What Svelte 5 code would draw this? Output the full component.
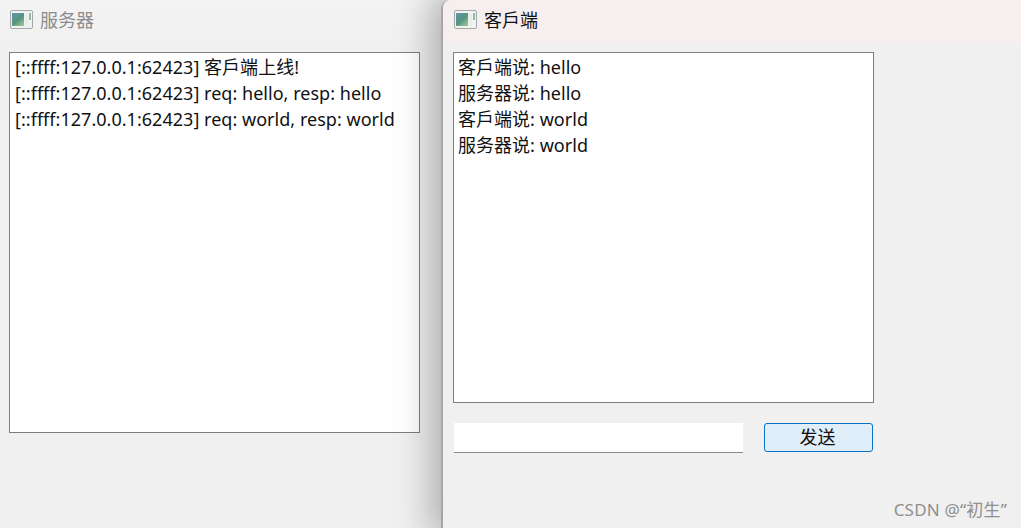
<script>
  const serverLines = [
    '[::ffff:127.0.0.1:62423] 客戶端上线!',
    '[::ffff:127.0.0.1:62423] req: hello, resp: hello',
    '[::ffff:127.0.0.1:62423] req: world, resp: world'
  ];
  const clientLines = ['客戶端说: hello', '服务器说: hello', '客戶端说: world', '服务器说: world'];
</script>

{#snippet icon()}
  <svg class="icon" width="23" height="19" viewBox="0 0 23 19" aria-hidden="true">
    <defs>
      <linearGradient id="pane" x1="0" y1="0" x2="0.7" y2="1">
        <stop offset="0" stop-color="#6a93aa" />
        <stop offset="0.6" stop-color="#52957f" />
        <stop offset="1" stop-color="#95bd95" />
      </linearGradient>
    </defs>
    <rect x="0.5" y="0.5" width="22" height="18" rx="1.5" fill="#f1f3f3" stroke="#a3a9ab" />
    <rect x="2" y="3" width="12" height="13" fill="url(#pane)" />
    <rect x="15" y="3" width="3" height="13" fill="#e8ecea" />
    <rect x="19" y="3" width="2" height="7" fill="#8dbea4" />
  </svg>
{/snippet}

<div class="desktop">
  <section class="win server">
    <header class="title">
      {@render icon()}
      <span>服务器</span>
    </header>
    <div class="log tall">
      {#each serverLines as line}<div>{line}</div>{/each}
    </div>
  </section>

  <section class="win client">
    <header class="title">
      {@render icon()}
      <span>客戶端</span>
    </header>
    <div class="body">
      <div class="log short">
        {#each clientLines as line}<div>{line}</div>{/each}
      </div>
      <div class="send">
        <input type="text" aria-label="message" />
        <button type="button">发送</button>
      </div>
    </div>
  </section>

  <div class="mark">CSDN @“初生”</div>
</div>

<style>
  :global(body) {
    margin: 0;
    overflow: hidden;
    background: #f0f0f0;
  }

  .desktop {
    position: relative;
    display: flex;
    width: 1021px;
    height: 528px;
    overflow: hidden;
    font-family: "Noto Sans", "Noto Sans CJK SC", sans-serif;
    color: #111;
  }

  .win {
    box-sizing: border-box;
    background: #f0f0f0;
  }

  .server {
    flex: 0 0 442px;
    background: linear-gradient(180deg, #f3f3f3 0, #f0f0f0 60px);
    padding: 0 0 0 9px;
  }

  .client {
    position: relative;
    flex: 1;
    border-left: 2px solid #a6a6a6;
    border-top-left-radius: 9px;
    margin-left: -1px;
    box-shadow: -4px 0 34px 8px rgba(0, 0, 0, 0.26);
    overflow: visible;
  }

  .title {
    display: flex;
    align-items: center;
    gap: 7px;
    height: 43px;
    box-sizing: border-box;
    padding-bottom: 5px;
    font-size: 18px;
  }

  .server .title {
    margin-left: 1px;
    margin-bottom: 9px;
    color: #8c8c8c;
  }

  .client .title {
    padding-left: 11px;
    background: #f7eef0;
    border-top-left-radius: 8px;
    color: #111;
  }

  .icon {
    flex: none;
  }

  .body {
    padding: 9px 0 0 10px;
  }

  .log {
    box-sizing: border-box;
    background: #fff;
    border: 1px solid #7a7f87;
    padding: 1px 4px 0 5px;
    font-size: 18px;
    letter-spacing: 0.03px;
    line-height: 26px;
    white-space: nowrap;
    overflow: hidden;
  }

  .tall {
    width: 411px;
    height: 381px;
  }

  .short {
    width: 421px;
    height: 351px;
    padding-left: 4px;
  }

  .send {
    display: flex;
    align-items: flex-start;
    margin-top: 20px;
  }

  input {
    box-sizing: border-box;
    width: 289px;
    height: 30px;
    margin: 0 21px 0 1px;
    padding: 0;
    border: 0;
    border-bottom: 1px solid #85888c;
    background: #fff;
    outline: none;
  }

  button {
    box-sizing: border-box;
    width: 109px;
    height: 29px;
    padding: 0 2px 0 0;
    border: 1px solid #0a72c4;
    border-radius: 3px;
    background: #e0eef9;
    color: #111;
    font-family: inherit;
    font-size: 18px;
    line-height: 27px;
  }

  .mark {
    position: absolute;
    right: 14px;
    bottom: 8px;
    font-size: 17px;
    letter-spacing: 0.2px;
    line-height: 20px;
    color: #8f8f8f;
  }
</style>
